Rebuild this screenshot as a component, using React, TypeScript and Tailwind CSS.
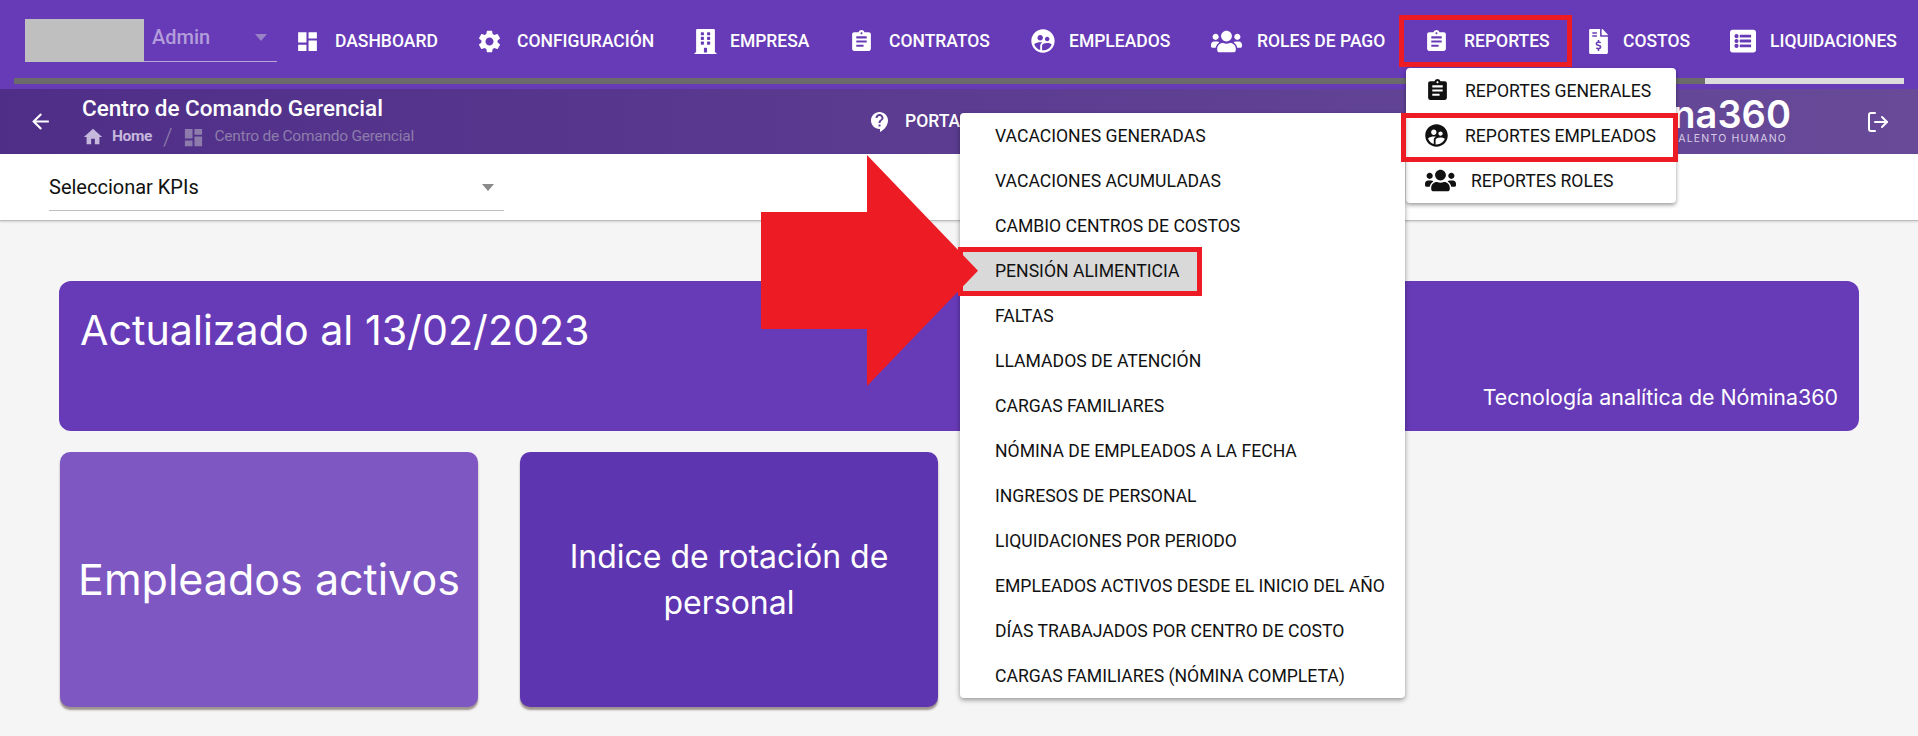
import type { ReactNode } from "react";
import {
  MdArrowBack,
  MdAssignment,
  MdContactSupport,
  MdDashboard,
  MdHome,
  MdSettings,
  MdSupervisedUserCircle,
} from "react-icons/md";
import {
  FaBuilding,
  FaFileInvoiceDollar,
  FaListAlt,
  FaUsers,
} from "react-icons/fa";
import { LogOut } from "lucide-react";

const navItems: { label: string; icon: ReactNode; width: string; gap: string }[] = [
  { label: "DASHBOARD", icon: <MdDashboard className="-ml-[3px] h-[25px] w-[25px]" />, width: "w-[181px]", gap: "w-[37px]" },
  { label: "CONFIGURACIÓN", icon: <MdSettings className="-ml-[3px] h-[27px] w-[27px]" />, width: "w-[214px]", gap: "w-[38px]" },
  { label: "EMPRESA", icon: <FaBuilding className="h-[25px] w-[25px]" />, width: "w-[159px]", gap: "w-[37px]" },
  { label: "CONTRATOS", icon: <MdAssignment className="-ml-[3px] h-[25px] w-[25px]" />, width: "w-[179px]", gap: "w-[37px]" },
  { label: "EMPLEADOS", icon: <MdSupervisedUserCircle className="-ml-[2px] h-[28px] w-[28px]" />, width: "w-[180px]", gap: "w-[38px]" },
  { label: "ROLES DE PAGO", icon: <FaUsers className="h-[31px] w-[31px]" />, width: "w-[216px]", gap: "w-[46px]" },
  { label: "REPORTES", icon: <MdAssignment className="-ml-[3px] h-[25px] w-[25px]" />, width: "w-[162px]", gap: "w-[37px]" },
  { label: "COSTOS", icon: <FaFileInvoiceDollar className="-ml-[3px] h-[25px] w-[25px]" />, width: "w-[141px]", gap: "w-[34px]" },
  { label: "LIQUIDACIONES", icon: <FaListAlt className="h-[26px] w-[26px]" />, width: "w-[167px]", gap: "w-[40px]" },
];

const reportItems = [
  "VACACIONES GENERADAS",
  "VACACIONES ACUMULADAS",
  "CAMBIO CENTROS DE COSTOS",
  "PENSIÓN ALIMENTICIA",
  "FALTAS",
  "LLAMADOS DE ATENCIÓN",
  "CARGAS FAMILIARES",
  "NÓMINA DE EMPLEADOS A LA FECHA",
  "INGRESOS DE PERSONAL",
  "LIQUIDACIONES POR PERIODO",
  "EMPLEADOS ACTIVOS DESDE EL INICIO DEL AÑO",
  "DÍAS TRABAJADOS POR CENTRO DE COSTO",
  "CARGAS FAMILIARES (NÓMINA COMPLETA)",
];

function TopNav() {
  return (
    <div className="h-[89px] bg-[#673ab7]">
      <div className="flex h-[78px] items-center pt-[4px] pl-[25px] text-white">
        <div className="-mt-[1px] h-[43px] w-[119px] bg-[#bfbfbf]" />
        <div className="-mt-[1px] flex h-[43px] w-[133px] items-center justify-between border-b border-[#b9a7da] pr-[10px] pb-[6px] pl-[8px] text-[20px] font-medium text-[#b39ddb]">
          <span>Admin</span>
          <span className="h-0 w-0 border-x-[6.5px] border-t-[7px] border-x-transparent border-t-[#9a82c7]" />
        </div>
        <div className="ml-[21px] flex items-center">
          {navItems.map((item) => (
            <div key={item.label} className={`flex items-center ${item.width}`}>
              <span className={`flex justify-start ${item.gap}`}>{item.icon}</span>
              <span className="text-[17.5px] font-medium whitespace-nowrap">{item.label}</span>
            </div>
          ))}
        </div>
      </div>
      <div className="mx-[14px] flex h-[6px]">
        <div className="w-[1691px] bg-[#6b6b6b]" />
        <div className="flex-1 bg-[#dcdcdc]" />
      </div>
    </div>
  );
}

function PageHeader() {
  return (
    <div className="flex h-[65px] items-center bg-gradient-to-r from-[#4f2e88] to-[#684a99] text-white">
      <MdArrowBack className="ml-[28px] h-[25px] w-[25px]" />
      <div className="ml-[29px] w-[786px] self-start pt-[6px]">
        <div className="text-[22.5px] leading-[26px] font-medium">Centro de Comando Gerencial</div>
        <div className="mt-[6px] flex h-[20px] items-center text-[15.5px]">
          <MdHome className="h-[22px] w-[22px] text-[#c5b8dc]" />
          <span className="ml-[8px] font-bold tracking-[-0.4px] text-[#c5b8dc]">Home</span>
          <span className="ml-[11px] text-[24px] font-light text-[#8d7cab]">/</span>
          <MdDashboard className="ml-[10px] h-[23px] w-[23px] text-[#8d7cab]" />
          <span className="ml-[9px] tracking-[-0.25px] text-[#8d7cab]">Centro de Comando Gerencial</span>
        </div>
      </div>
      <MdContactSupport className="h-[24px] w-[24px]" />
      <span className="ml-[13px] text-[17.5px] font-medium">PORTAL</span>
      <div className="ml-auto flex flex-col items-end">
        <span className="font-['Inter',sans-serif] text-[38px] leading-[35px] font-semibold">Nómina360</span>
        <span className="mr-[4px] font-['Inter',sans-serif] text-[10.5px] leading-[14px] tracking-[1.2px] text-[#d6cde6]">TALENTO HUMANO</span>
      </div>
      <LogOut className="mr-[28px] ml-[75px] h-[24px] w-[24px]" strokeWidth={2} />
    </div>
  );
}

function KpiFilter() {
  return (
    <div className="h-[67px] border-b border-[#bdbdbd] bg-white pl-[49px] shadow-[0_1px_2px_rgba(0,0,0,0.15)]">
      <div className="flex h-[57px] w-[455px] items-center justify-between border-b border-[#bdbdbd] pt-[10px] pr-[10px] text-[20px] text-[#111]">
        <span>Seleccionar KPIs</span>
        <span className="h-0 w-0 border-x-[6px] border-t-[7px] border-x-transparent border-t-[#8a8a8a]" />
      </div>
    </div>
  );
}

function Dashboard() {
  return (
    <div className="pt-[60px] pl-[59px] font-['Inter',sans-serif] text-white">
      <div className="flex h-[150px] w-[1800px] flex-col rounded-[12px] bg-[#673ab7] px-[21px]">
        <div className="pt-[25px] text-[41.2px] leading-[48px] font-normal">Actualizado al 13/02/2023</div>
        <div className="mt-auto mb-[22px] self-end text-[21.4px] leading-[24px] font-normal">Tecnología analítica de Nómina360</div>
      </div>
      <div className="mt-[21px] ml-[1px] flex gap-[42px]">
        <div className="flex h-[255px] w-[418px] items-center justify-center rounded-[10px] bg-[#7e57c2] text-[43px] font-normal shadow-[0_3px_2px_rgba(70,50,40,0.5)]">
          Empleados activos
        </div>
        <div className="flex h-[255px] w-[418px] items-center justify-center rounded-[10px] bg-[#5e35b1] text-center text-[32px] leading-[46px] font-normal shadow-[0_3px_2px_rgba(70,50,40,0.5)]">
          <span>
            Indice de rotación de
            <br />
            personal
          </span>
        </div>
      </div>
    </div>
  );
}

function ReportMenu() {
  return (
    <div className="absolute top-[68px] left-[1406px] h-[135px] w-[270px] rounded-[4px] bg-white text-[17.6px] text-[#111] shadow-[0_2px_4px_rgba(0,0,0,0.4)]">
      <div className="flex h-[45px] items-center pl-[19px]">
        <span className="w-[40px]"><MdAssignment className="h-[25px] w-[25px]" /></span>
        <span className="pt-[1px]">REPORTES GENERALES</span>
      </div>
      <div className="flex h-[45px] items-center pl-[17px]">
        <span className="w-[42px]"><MdSupervisedUserCircle className="h-[27px] w-[27px]" /></span>
        <span className="pt-[1px]">REPORTES EMPLEADOS</span>
      </div>
      <div className="flex h-[45px] items-center pl-[19px]">
        <span className="w-[46px]"><FaUsers className="h-[31px] w-[31px]" /></span>
        <span className="pt-[1px]">REPORTES ROLES</span>
      </div>
    </div>
  );
}

function EmployeeMenu() {
  return (
    <div className="absolute top-[113px] left-[960px] w-[445px] rounded-[4px] bg-white text-[17.6px] text-[#111] shadow-[0_2px_5px_rgba(0,0,0,0.4)]">
      {reportItems.map((label) => (
        <div
          key={label}
          className={
            label === "PENSIÓN ALIMENTICIA"
              ? "flex h-[45px] w-[238px] items-center bg-[#d9d9d9] pt-[1px] pl-[35px]"
              : "flex h-[45px] items-center pt-[1px] pl-[35px]"
          }
        >
          {label}
        </div>
      ))}
    </div>
  );
}

// red marks drawn over the screenshot
function Annotations() {
  return (
    <>
      <div className="absolute top-[15px] left-[1399px] h-[52px] w-[173px] border-[5px] border-[#ed1c24]" />
      <div className="absolute top-[113px] left-[1401px] h-[49px] w-[277px] border-[5px] border-[#ed1c24]" />
      <div className="absolute top-[247px] left-[958px] h-[49px] w-[244px] border-[5px] border-[#ed1c24]" />
      <svg className="absolute top-[155px] left-[761px]" width="218" height="232" viewBox="0 0 218 232">
        <path d="M0 57H106V0L217 115.7 106 231V174H0Z" fill="#ed1c24" />
      </svg>
    </>
  );
}

export default function App() {
  return (
    <div className="relative h-[736px] w-[1918px] overflow-hidden bg-[#f5f5f5] font-['Roboto',sans-serif]">
      <TopNav />
      <PageHeader />
      <KpiFilter />
      <Dashboard />
      <ReportMenu />
      <EmployeeMenu />
      <Annotations />
    </div>
  );
}
